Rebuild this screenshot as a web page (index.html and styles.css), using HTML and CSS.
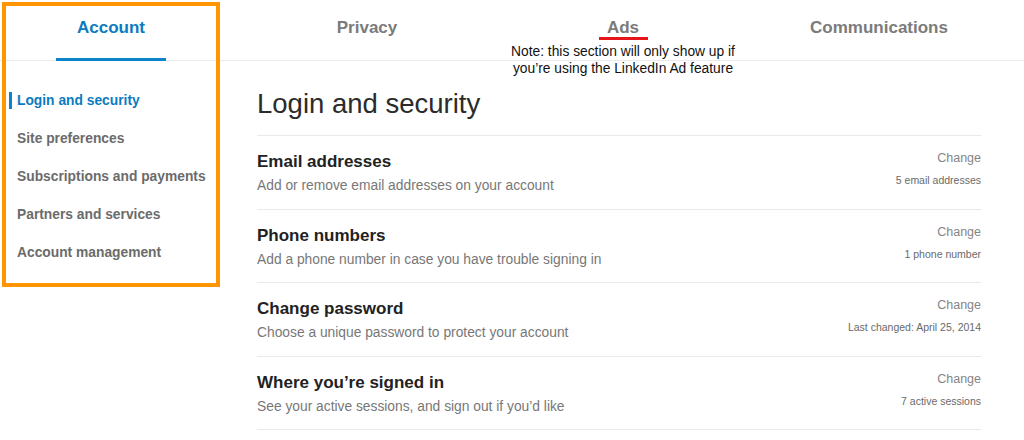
FILE: index.html
```html
<!DOCTYPE html>
<html lang="en">
<head>
<meta charset="utf-8">
<title>Settings</title>
<link rel="stylesheet" href="styles.css">
</head>
<body>
<header class="topnav">
  <nav class="tabs">
    <a class="tab tab-active">Account</a>
    <a class="tab">Privacy</a>
    <a class="tab tab-ads">Ads
      <span class="ads-mark"></span>
      <span class="ads-note">Note: this section will only show up if<br>you’re using the LinkedIn Ad feature</span>
    </a>
    <a class="tab">Communications</a>
  </nav>
</header>
<div class="layout">
  <aside class="sidebar">
    <ul class="side-list">
      <li class="side-item side-active">Login and security</li>
      <li class="side-item">Site preferences</li>
      <li class="side-item">Subscriptions and payments</li>
      <li class="side-item">Partners and services</li>
      <li class="side-item">Account management</li>
    </ul>
  </aside>
  <main class="content">
    <h1 class="page-title">Login and security</h1>
    <section class="row">
      <div class="row-main">
        <h2 class="row-title">Email addresses</h2>
        <p class="row-desc">Add or remove email addresses on your account</p>
      </div>
      <div class="row-side">
        <a class="row-change">Change</a>
        <span class="row-meta">5 email addresses</span>
      </div>
    </section>
    <section class="row">
      <div class="row-main">
        <h2 class="row-title">Phone numbers</h2>
        <p class="row-desc">Add a phone number in case you have trouble signing in</p>
      </div>
      <div class="row-side">
        <a class="row-change">Change</a>
        <span class="row-meta">1 phone number</span>
      </div>
    </section>
    <section class="row">
      <div class="row-main">
        <h2 class="row-title">Change password</h2>
        <p class="row-desc">Choose a unique password to protect your account</p>
      </div>
      <div class="row-side">
        <a class="row-change">Change</a>
        <span class="row-meta">Last changed: April 25, 2014</span>
      </div>
    </section>
    <section class="row">
      <div class="row-main">
        <h2 class="row-title">Where you’re signed in</h2>
        <p class="row-desc">See your active sessions, and sign out if you’d like</p>
      </div>
      <div class="row-side">
        <a class="row-change">Change</a>
        <span class="row-meta">7 active sessions</span>
      </div>
    </section>
    <div class="row-end"></div>
  </main>
</div>
<div class="highlight-box"></div>
</body>
</html>
```

FILE: styles.css
```css
* { box-sizing: border-box; }
html, body { margin: 0; padding: 0; background: #fff; }
body {
  font-family: "Liberation Sans", Arial, Helvetica, sans-serif;
  color: #222;
  width: 1024px;
  height: 440px;
  overflow: hidden;
  position: relative;
}
.topnav {
  height: 61px;
  border-bottom: 1px solid #ebebeb;
}
.tabs {
  display: flex;
  margin-left: -17px;
}
.tab {
  position: relative;
  width: 256px;
  height: 60px;
  padding-top: 18px;
  line-height: 20px;
  text-align: center;
  font-size: 17px;
  font-weight: bold;
  color: #7b7b7b;
}
.tab-active { color: #0b7bc1; }
.tab-active::after {
  content: "";
  position: absolute;
  left: 73px;
  width: 110px;
  bottom: -1px;
  height: 3px;
  background: #0b84cc;
}
.ads-mark {
  position: absolute;
  left: 104px;
  top: 37px;
  width: 49px;
  height: 3px;
  background: #e8141b;
}
.ads-note {
  position: absolute;
  left: 0;
  right: 0;
  top: 43px;
  margin: 0 -40px;
  font-size: 13.8px;
  line-height: 17px;
  font-weight: normal;
  color: #111;
  z-index: 2;
}
.layout {
  display: flex;
}
.sidebar {
  width: 257px;
  flex: none;
  padding-top: 21px;
}
.side-list {
  list-style: none;
  margin: 0;
  padding: 0;
}
.side-item {
  position: relative;
  height: 38px;
  line-height: 38px;
  padding-left: 17px;
  font-size: 13.8px;
  font-weight: bold;
  color: #6b6b6b;
}
.side-active { color: #0b7bc1; }
.side-active::before {
  content: "";
  position: absolute;
  left: 9px;
  top: 10px;
  width: 3px;
  height: 17px;
  background: #0b84cc;
}
.content {
  width: 724px;
  flex: none;
}
.page-title {
  margin: 26px 0 14px;
  height: 34px;
  line-height: 34px;
  font-size: 27.5px;
  font-weight: normal;
  color: #2b2b2b;
}
.row {
  display: flex;
  justify-content: space-between;
  border-top: 1px solid #e9e9e9;
  height: 73.5px;
  padding-top: 13px;
}
.row-title {
  margin: 2px 0 0;
  font-size: 17px;
  line-height: 22px;
  font-weight: bold;
  color: #222;
}
.row-desc {
  margin: 3px 0 0;
  font-size: 13.8px;
  line-height: 20px;
  color: #777;
}
.row-side {
  display: flex;
  flex-direction: column;
  align-items: flex-end;
}
.row-change {
  font-size: 12.5px;
  line-height: 18px;
  color: #858585;
}
.row-meta {
  margin-top: 5px;
  font-size: 10.5px;
  line-height: 16px;
  color: #6a6a6a;
}
.row-end { border-top: 1px solid #e9e9e9; }
.highlight-box {
  position: absolute;
  left: 2px;
  top: 2px;
  width: 218px;
  height: 285px;
  border: 4px solid #ff9500;
  pointer-events: none;
}
```
